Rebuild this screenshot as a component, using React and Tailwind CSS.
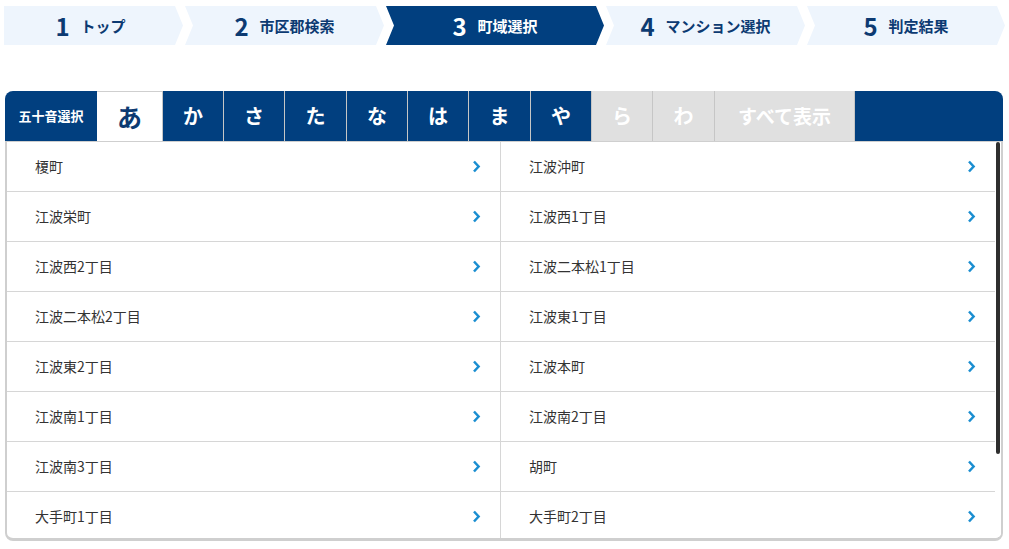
import React from "react";

const steps = [
  { n: "1", label: "トップ", w: "w-[179px]", first: true },
  { n: "2", label: "市区郡検索", w: "w-[199px]" },
  { n: "3", label: "町域選択", w: "w-[218px]", active: true },
  { n: "4", label: "マンション選択", w: "w-[199px]" },
  { n: "5", label: "判定結果", w: "w-[198px]" },
];

const tabs = [
  { t: "あ", state: "active", w: "w-[65px]" },
  { t: "か", state: "on", w: "w-[61px]" },
  { t: "さ", state: "on", w: "w-[61px]" },
  { t: "た", state: "on", w: "w-[62px]" },
  { t: "な", state: "on", w: "w-[61px]" },
  { t: "は", state: "on", w: "w-[61px]" },
  { t: "ま", state: "on", w: "w-[62px]" },
  { t: "や", state: "on", w: "w-[61px]" },
  { t: "ら", state: "off", w: "w-[61px]" },
  { t: "わ", state: "off", w: "w-[62px]" },
];

const items = [
  "榎町", "江波沖町",
  "江波栄町", "江波西1丁目",
  "江波西2丁目", "江波二本松1丁目",
  "江波二本松2丁目", "江波東1丁目",
  "江波東2丁目", "江波本町",
  "江波南1丁目", "江波南2丁目",
  "江波南3丁目", "胡町",
  "大手町1丁目", "大手町2丁目",
];

function Chevron() {
  return (
    <svg width="9" height="13" viewBox="0 0 9 13" className="shrink-0">
      <path d="M2 1.5 L6.6 6.5 L2 11.5" fill="none" stroke="#1a8ed1" strokeWidth="2.5" strokeLinejoin="miter" />
    </svg>
  );
}

export default function App() {
  const font = { fontFamily: '"Noto Sans CJK JP", "Noto Sans", sans-serif' };
  return (
    <div className="w-[1009px] h-[549px] bg-white overflow-hidden" style={font}>
      {/* breadcrumb */}
      <div className="flex gap-[2px] pl-[4px] pt-[6px]">
        {steps.map((s) => (
          <div
            key={s.n}
            className={`${s.w} h-[39px] flex items-center justify-center gap-[11px] ${
              s.active ? "bg-[#013f7f] text-white" : "bg-[#eef5fd] text-[#0c3a72]"
            } ${
              s.first
                ? "pr-[6px] [clip-path:polygon(0_0,calc(100%-8px)_0,100%_50%,calc(100%-8px)_100%,0_100%)]"
                : "[clip-path:polygon(0_0,calc(100%-8px)_0,100%_50%,calc(100%-8px)_100%,0_100%,8px_50%)]"
            }`}
          >
            <span className="text-[24px] font-bold leading-none">{s.n}</span>
            <span className="text-[15px] font-bold leading-none">{s.label}</span>
          </div>
        ))}
      </div>

      {/* panel */}
      <div className="ml-[5px] mt-[46px] w-[998px]">
        {/* header */}
        <div className="h-[51px] bg-[#013f7f] rounded-t-[8px] flex items-stretch overflow-hidden border-b border-[#cfcfcf]">
          <div className="w-[92px] flex items-center justify-center text-white text-[13px] font-bold">
            五十音選択
          </div>
          {tabs.map((tab) => (
            <div
              key={tab.t}
              className={`${tab.w} ${tab.state === "active" ? "" : "border-l border-[#c6c6c6]"} flex items-center justify-center font-bold ${
                tab.state === "active"
                  ? "bg-white text-[#0c3a72] text-[25px] border-t border-[#cfcfcf]"
                  : tab.state === "on"
                  ? "text-white text-[20px]"
                  : "bg-[#e0e0e0] text-white text-[20px]"
              }`}
            >
              {tab.t}
            </div>
          ))}
          <div className="w-[141px] border-l border-r border-[#c6c6c6] bg-[#e0e0e0] text-white text-[19px] font-bold flex items-center justify-center">
            すべて表示
          </div>
        </div>

        {/* list */}
        <div className="h-[399px] border-x-[2px] border-b-[3px] border-[#cfcfcf] rounded-b-[8px] overflow-hidden flex">
          <div className="flex-1 overflow-hidden">
            <div className="grid grid-cols-2">
              {items.map((it, i) => (
                <div
                  key={i}
                  className={`h-[50px] flex items-center justify-between pl-[28px] pr-[19px] border-b border-[#d6d6d6] ${
                    i % 2 === 0 ? "border-r" : ""
                  }`}
                >
                  <span className="text-[14px] text-[#333333]">{it}</span>
                  <Chevron />
                </div>
              ))}
            </div>
          </div>
          <div className="w-[6px] bg-white pl-[1px] pr-[1px]">
            <div className="h-[312px] w-[4px] bg-[#2e2e2e] rounded-[2px]" />
          </div>
        </div>
      </div>
    </div>
  );
}
